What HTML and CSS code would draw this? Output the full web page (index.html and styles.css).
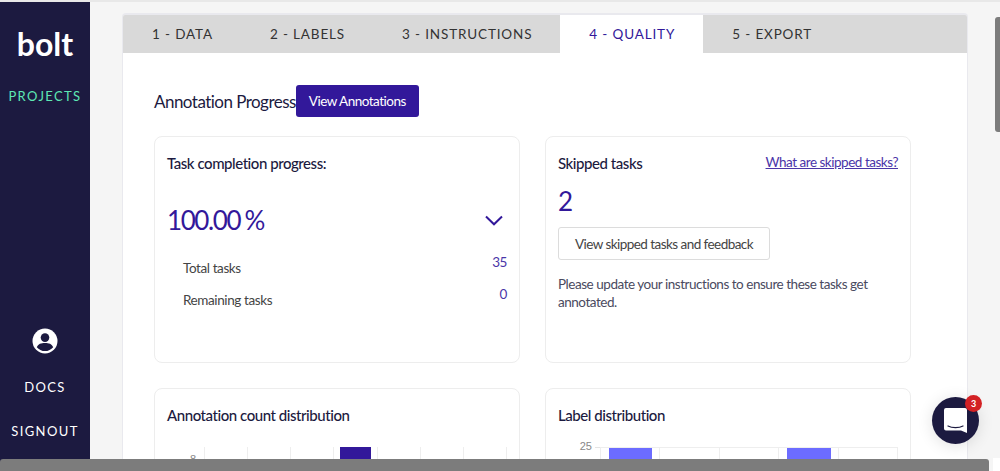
FILE: index.html
```html
<!DOCTYPE html>
<html lang="en">
<head>
    <meta charset="UTF-8" />
    <meta name="viewport" content="width=device-width, initial-scale=1" />
    <title>Bolt - Quality</title>
    <link rel="stylesheet" href="styles.css">
</head>
<body>

    <div class="app">

        <!-- Sidebar -->
        <nav class="sidebar">
            <div class="logo">bolt</div>
            <a class="side-link active">PROJECTS</a>
            <div class="side-bottom">
                <svg class="user-icon" viewBox="0 0 26 26" width="26" height="26">
                    <circle cx="13" cy="13" r="12.5" fill="#fff"/>
                    <circle cx="13" cy="9.6" r="4.3" fill="#1c1a40"/>
                    <path d="M4.8 19.2c1.2-3.4 4.4-4.3 8.2-4.3s7 .9 8.2 4.3c-2 2.400-5 3.900-8.200 3.900s-6.200-1.500-8.200-3.900z" fill="#1c1a40"/>
                </svg>
                <a class="side-link">DOCS</a>
                <a class="side-link">SIGNOUT</a>
            </div>
        </nav>

        <main class="main">
            <div class="panel">

                <div class="tabs">
                    <div class="tab">1 - DATA</div>
                    <div class="tab">2 - LABELS</div>
                    <div class="tab">3 - INSTRUCTIONS</div>
                    <div class="tab current">4 - QUALITY</div>
                    <div class="tab">5 - EXPORT</div>
                </div>

                <div class="content">
                    <div class="heading">
                        <h2>Annotation Progress</h2>
                        <button class="btn-primary">View Annotations</button>
                    </div>

                    <div class="cards">

                        <div class="card card-tall">
                            <h3>Task completion progress:</h3>
                            <div class="progress-row">
                                <span class="big-number">100.00 %</span>
                                <svg class="chevron" viewBox="0 0 18 11" width="18" height="11">
                                    <path d="M1 1.500L9 9.300l8-7.800" fill="none" stroke="#32189a" stroke-width="2"/>
                                </svg>
                            </div>
                            <div class="stat-row">
                                <span class="stat-label">Total tasks</span>
                                <span class="stat-value">35</span>
                            </div>
                            <div class="stat-row">
                                <span class="stat-label">Remaining tasks</span>
                                <span class="stat-value">0</span>
                            </div>
                        </div>

                        <div class="card card-tall">
                            <div class="card-head">
                                <h3>Skipped tasks</h3>
                                <a class="help-link">What are skipped tasks?</a>
                            </div>
                            <div class="skipped-count">2</div>
                            <button class="btn-outline">View skipped tasks and feedback</button>
                            <p class="note">Please update your instructions to ensure these tasks get annotated.</p>
                        </div>

                        <div class="card">
                            <h3>Annotation count distribution</h3>
                            <div class="chart chart-count">
                                <span class="tick">8</span>
                                <div class="plot">
                                    <div class="cell"></div>
                                    <div class="cell"></div>
                                    <div class="cell"></div>
                                    <div class="cell"><div class="bar dark"></div></div>
                                    <div class="cell"></div>
                                    <div class="cell"></div>
                                    <div class="cell"></div>
                                </div>
                            </div>
                        </div>

                        <div class="card">
                            <h3>Label distribution</h3>
                            <div class="chart chart-label">
                                <span class="tick">25</span>
                                <div class="plot">
                                    <div class="cell"><div class="bar light"></div></div>
                                    <div class="cell"></div>
                                    <div class="cell"></div>
                                    <div class="cell"><div class="bar light"></div></div>
                                    <div class="cell"></div>
                                </div>
                            </div>
                        </div>

                    </div>
                </div>
            </div>
        </main>
    </div>

    <!-- Chat widget -->
    <div class="chat">
        <svg viewBox="0 0 23 25" width="23" height="25">
            <path d="M2 0h19a2 2 0 0 1 2 2v23l-6-2.500H2a2 2 0 0 1-2-2V2a2 2 0 0 1 2-2z" fill="#fff"/>
            <path d="M4 18c4 2.200 11 2.200 15 0" fill="none" stroke="#1c1a40" stroke-width="1.200" stroke-linecap="round"/>
        </svg>
        <span class="chat-badge">3</span>
    </div>

    <div class="scroll-v"></div>
    <div class="scroll-h"></div>
    <div class="scroll-corner"></div>

</body>
</html>
```

FILE: styles.css
```css
* {
    box-sizing: border-box;
}
html, body {
    height: 100%;
    margin: 0;
    overflow: hidden;
}
body {
    font-family: Lato, 'Open Sans', sans-serif;
    background-color: #f5f5f5;
    border-top: 2px solid #e8e8e8;
    color: #1c1a40;
}
.app {
    display: flex;
    height: 469px;
    overflow: hidden;
}

/* Sidebar */
.sidebar {
    width: 90px;
    flex-shrink: 0;
    background-color: #1c1a40;
    display: flex;
    flex-direction: column;
    align-items: center;
}
.logo {
    color: #fff;
    font-size: 32px;
    font-weight: 700;
    line-height: 32px;
    margin-top: 26px;
}
.side-link {
    color: #fff;
    font-size: 13px;
    line-height: 16px;
    letter-spacing: 1.4px;
}
.side-link.active {
    color: #5ee8b4;
    margin-top: 28px;
}
.side-bottom {
    margin-top: auto;
    display: flex;
    flex-direction: column;
    align-items: center;
    gap: 28px;
    padding-bottom: 32px;
}
.user-icon {
    margin-bottom: -3px;
}

/* Panel */
.main {
    flex: 1;
    padding: 11px 0 0 32px;
}
.panel {
    width: 846px;
    background-color: #fff;
    border: 1px solid #e9e9ee;
    border-top-width: 2px;
    border-bottom: 0;
    border-radius: 4px 4px 0 0;
    height: 480px;
}
.tabs {
    display: flex;
    height: 38px;
    background-color: #d9d9d9;
    border-radius: 2px 2px 0 0;
}
.tab {
    padding: 0 28px 0 29px;
    font-size: 13.5px;
    line-height: 38px;
    letter-spacing: 0.85px;
    color: #333;
}
.tab.current {
    background-color: #fff;
    color: #32189a;
}
.content {
    padding: 32px 55px 0 31px;
}
.heading {
    display: flex;
    align-items: center;
}
h2 {
    margin: 0;
    font-size: 17px;
    font-weight: 400;
    letter-spacing: -0.53px;
    color: #1c1a40;
}
.btn-primary {
    height: 32px;
    width: 123px;
    padding: 0;
    border: 0;
    border-radius: 3px;
    background-color: #32189a;
    color: #fff;
    font-family: inherit;
    font-size: 13.5px;
    letter-spacing: -0.5px;
}

/* Cards */
.cards {
    display: grid;
    grid-template-columns: 366px 366px;
    gap: 25px;
    margin-top: 19px;
}
.card {
    background-color: #fff;
    border: 1px solid #ededed;
    border-radius: 8px;
    padding: 18px 12px 0;
    height: 120px;
}
.card-tall {
    height: 227px;
}
h3 {
    margin: 0;
    font-size: 15px;
    font-weight: 500;
    line-height: 17px;
    letter-spacing: -0.45px;
    color: #1c1a40;
}
.progress-row {
    display: flex;
    justify-content: space-between;
    align-items: center;
    margin-top: 33px;
    padding-right: 4px;
}
.big-number {
    font-size: 26px;
    line-height: 30px;
    letter-spacing: -1.4px;
    word-spacing: -1px;
    color: #32189a;
}
.stat-row {
    display: flex;
    justify-content: space-between;
    padding: 0 0 0 16px;
    height: 31.5px;
    font-size: 13.5px;
    letter-spacing: -0.4px;
    color: #444;
}
.progress-row + .stat-row {
    margin-top: 25px;
}
.stat-label {
    line-height: 16px;
}
.stat-value {
    color: #4a35a8;
    line-height: 16px;
    margin-top: -6px;
}
.card-head {
    display: flex;
    justify-content: space-between;
    align-items: flex-start;
}
.help-link {
    color: #4a35a8;
    font-size: 13.5px;
    line-height: 16px;
    letter-spacing: -0.48px;
    text-decoration: underline;
    margin-top: -1px;
}
.skipped-count {
    font-size: 26px;
    line-height: 30px;
    color: #32189a;
    margin-top: 14px;
}
.btn-outline {
    display: block;
    width: 212px;
    height: 33px;
    margin-top: 11px;
    padding: 0;
    background-color: #fff;
    border: 1px solid #dcdcdc;
    border-radius: 3px;
    color: #444;
    font-family: inherit;
    font-size: 13.5px;
    letter-spacing: -0.55px;
}
.note {
    margin: 15px 0 0;
    font-size: 13.5px;
    line-height: 18px;
    letter-spacing: -0.47px;
    color: #4a4a60;
}

/* Charts, cut off by the fold */
.chart {
    display: flex;
    margin-top: 23px;
    height: 60px;
}
.tick {
    position: relative;
    flex-shrink: 0;
    padding-right: 8px;
    height: 11px;
    font-family: 'Liberation Sans', Arial, sans-serif;
    font-size: 11px;
    line-height: 11px;
    text-align: right;
    color: #888;
}
.chart-count .tick {
    width: 37px;
    margin-top: 7px;
}
.chart-label .tick {
    width: 42px;
    margin-top: -6px;
}
/* small mark between the number and the plot */
.chart-label .tick::after {
    content: "";
    position: absolute;
    right: 0;
    top: 6px;
    width: 5px;
    height: 1px;
    background-color: #e4e4e4;
}
.plot {
    display: flex;
    flex: 1;
    height: 60px;
    border-right: 1px solid #eee;
}
.chart-label .plot {
    border-top: 1px solid #eee;
}
.cell {
    flex: 1;
    border-left: 1px solid #eee;
}
.bar {
    height: 100%;
    margin: 0 6px;
}
.chart-label .bar {
    margin: 0 7px 0 8px;
}
.bar.dark {
    background-color: #32189a;
}
.bar.light {
    background-color: #6c6cff;
}

/* Chat */
.chat {
    position: fixed;
    left: 932px;
    top: 397px;
    width: 47px;
    height: 47px;
    border-radius: 50%;
    background-color: #1c1a40;
    box-shadow: 0 2px 16px rgba(0, 0, 0, 0.12);
    display: flex;
    align-items: center;
    justify-content: center;
}
.chat-badge {
    position: absolute;
    top: -2px;
    right: -3px;
    width: 17px;
    height: 17px;
    border-radius: 50%;
    background-color: #d32124;
    color: #fff;
    font-size: 9px;
    font-weight: 700;
    line-height: 17px;
    text-align: center;
}

/* Overlay scrollbars */
.scroll-v {
    position: fixed;
    left: 995px;
    top: 17px;
    width: 5px;
    height: 115px;
    border-radius: 3px 0 0 3px;
    background-color: #7c7c7c;
}
.scroll-h {
    position: fixed;
    left: 0;
    top: 459px;
    width: 989px;
    height: 12px;
    border-radius: 3px 3px 0 0;
    background-color: #7c7c7c;
}
.scroll-corner {
    position: fixed;
    right: 0;
    bottom: 0;
    width: 7px;
    height: 13px;
    background-color: #fff;
}
```
